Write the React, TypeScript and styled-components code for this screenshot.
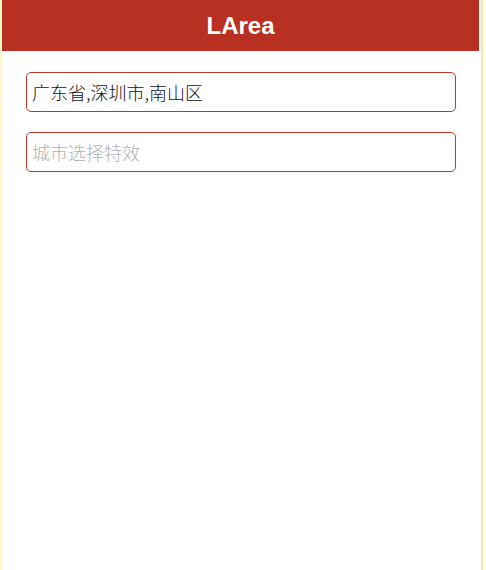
import { createGlobalStyle, styled } from 'styled-components'

const GlobalStyle = createGlobalStyle`
  html, body {
    margin: 0;
    padding: 0;
    background: #fffef4;
  }
  body {
    font-family: "Liberation Sans", "Noto Sans CJK SC", sans-serif;
  }
`

const Page = styled.div`
  box-sizing: border-box;
  width: 483px;
  min-height: 570px;
  background: #fff;
  border-left: 2px solid #fdf8c4;
  border-right: 2px solid #efe9b0;
  padding-right: 2px;
`

const Header = styled.header`
  height: 51px;
  background: #b83021;
  color: #fff;
  display: flex;
  align-items: center;
  justify-content: center;
  font-size: 24px;
  font-weight: bold;
  font-family: "Liberation Sans", Arial, sans-serif;
`

const Form = styled.div`
  display: flex;
  flex-direction: column;
  gap: 20px;
  padding: 21px 24px 0 24px;
`

const Field = styled.input`
  box-sizing: border-box;
  width: 430px;
  height: 40px;
  border: 1px solid #c0392b;
  border-radius: 5px;
  padding: 0 5px;
  font-size: 18px;
  font-weight: 300;
  color: #111;
  background: #fff;
  outline: none;
  font-family: "Noto Sans CJK SC", sans-serif;

  &::placeholder {
    color: #b0b0b0;
  }
`

export default function App() {
  return (
    <>
      <GlobalStyle />
      <Page>
        <Header>LArea</Header>
        <Form>
          <Field readOnly defaultValue="广东省,深圳市,南山区" />
          <Field readOnly placeholder="城市选择特效" />
        </Form>
      </Page>
    </>
  )
}
